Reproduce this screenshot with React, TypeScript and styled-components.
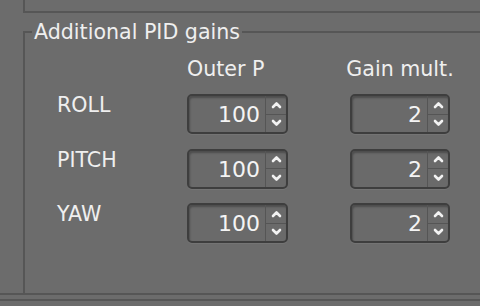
import React from "react";
import styled, { createGlobalStyle } from "styled-components";

const Global = createGlobalStyle`
  html, body { margin: 0; padding: 0; background: #6c6c6c; }
  body { width: 480px; height: 306px; overflow: hidden; font-family: "DejaVu Sans", "Liberation Sans", sans-serif; }
  #root { width: 480px; height: 306px; }
`;

const LINE = "#565656";

const Window = styled.div`
  width: 480px;
  height: 306px;
  display: flex;
  flex-direction: column;
  background: #6c6c6c;
  color: #efefef;
`;

const TopPanel = styled.div`
  margin-left: 23px;
  height: 11px;
  border-left: 2px solid ${LINE};
  border-bottom: 2px solid ${LINE};
`;

const Group = styled.fieldset`
  margin: 7px 0 0 0;
  margin-left: 23px;
  height: 273px;
  box-sizing: border-box;
  border: 2px solid ${LINE};
  border-right: none;
  border-bottom: none;
  padding: 0 0 0 7px;
  min-width: 0;
`;

const Legend = styled.legend`
  padding: 0 2px;
  font-size: 20.6px;
  line-height: 24px;
  color: #efefef;
`;

const Grid = styled.div`
  margin-top: 13px;
  padding-left: 25px;
  display: grid;
  grid-template-columns: 130px 101px 62px 100px;
  row-gap: 14.5px;
  align-items: start;
`;

const Header = styled.div<{ $center?: boolean; $col: number }>`
  grid-column: ${(p) => p.$col};
  font-size: 20.6px;
  line-height: 24px;
  justify-self: ${(p) => (p.$center ? "center" : "start")};
  white-space: nowrap;
  margin-bottom: -1.5px;
`;

const RowLabel = styled.div`
  grid-column: 1;
  font-size: 20.6px;
  line-height: 24px;
  margin-top: -1px;
`;

const Spinner = styled.div<{ $col: number }>`
  grid-column: ${(p) => p.$col};
  height: 40px;
  box-sizing: border-box;
  display: flex;
  border: 2px solid #3e3e3e;
  border-radius: 5px;
  background: #6a6a6a;
  box-shadow: inset 1px 2px 2px rgba(0, 0, 0, 0.28), 0 1px 0 rgba(255, 255, 255, 0.06);
  overflow: hidden;
`;

const Value = styled.div`
  flex: 1;
  display: flex;
  align-items: center;
  justify-content: flex-end;
  padding-right: 5px;
  font-size: 22px;
  line-height: 24px;
  color: #f4f4f4;
  padding-top: 2px;
`;

const Buttons = styled.div`
  width: 20px;
  display: flex;
  flex-direction: column;
  border-left: 1px solid #555;
`;

const ArrowButton = styled.div<{ $down?: boolean }>`
  flex: 1;
  display: flex;
  align-items: center;
  justify-content: center;
  border-top: ${(p) => (p.$down ? "1px solid #555" : "none")};
`;

const Chevron = ({ down }: { down?: boolean }) => (
  <svg width="11" height="8" viewBox="0 0 11 8">
    <path
      d={down ? "M2 2 L5.5 5.5 L9 2" : "M2 6 L5.5 2.5 L9 6"}
      fill="none"
      stroke="#f2f2f2"
      strokeWidth="2.6"
      strokeLinecap="round"
      strokeLinejoin="round"
    />
  </svg>
);

const SpinBox = ({ value, col }: { value: number; col: number }) => (
  <Spinner $col={col}>
    <Value>{value}</Value>
    <Buttons>
      <ArrowButton>
        <Chevron />
      </ArrowButton>
      <ArrowButton $down>
        <Chevron down />
      </ArrowButton>
    </Buttons>
  </Spinner>
);

const Footer = styled.div`
  margin-top: auto;
  height: 4px;
  border-top: 2px solid ${LINE};
  border-bottom: 2px solid ${LINE};
  margin-bottom: 5px;
`;

const rows = [
  { name: "ROLL", p: 100, mult: 2 },
  { name: "PITCH", p: 100, mult: 2 },
  { name: "YAW", p: 100, mult: 2 },
];

export default function App() {
  return (
    <Window>
      <Global />
      <TopPanel />
      <Group>
        <Legend>Additional PID gains</Legend>
        <Grid>
          <Header $col={2}>Outer P</Header>
          <Header $col={4} $center>
            Gain mult.
          </Header>
          {rows.map((r) => (
            <React.Fragment key={r.name}>
              <RowLabel>{r.name}</RowLabel>
              <SpinBox value={r.p} col={2} />
              <SpinBox value={r.mult} col={4} />
            </React.Fragment>
          ))}
        </Grid>
      </Group>
      <Footer />
    </Window>
  );
}
